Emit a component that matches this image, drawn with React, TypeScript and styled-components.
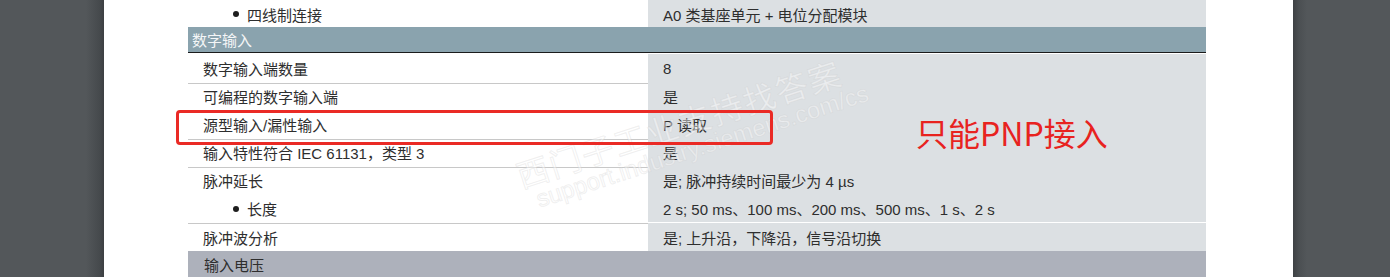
import React from "react";
import styled, { createGlobalStyle } from "styled-components";

const Global = createGlobalStyle`
  html, body { margin: 0; padding: 0; background: #505457; }
  body { font-family: "Liberation Sans", "Noto Sans CJK SC", sans-serif; }
`;

const Viewer = styled.div`
  display: flex;
  height: 277px;
  overflow: hidden;
  background: #505457;
`;

const Gutter = styled.div<{ $side: "left" | "right" }>`
  flex: ${(p) => (p.$side === "left" ? "0 0 104px" : "1 1 auto")};
  background: ${(p) =>
    p.$side === "left"
      ? "linear-gradient(to right, #53575a 0, #53575a 86px, #45494c 100px, #3c3f42 104px)"
      : "linear-gradient(to right, #3e4144 0, #4b4f52 6px, #53575a 14px, #53575a 100%)"};
`;

const Page = styled.div`
  position: relative;
  flex: 0 0 1189px;
  background: #ffffff;
  padding-left: 84px;
  box-sizing: border-box;
`;

const Table = styled.div`
  width: 1018px;
  display: flex;
  flex-direction: column;
  color: #2e2e2e;
  font-size: 15px;
`;

const Row = styled.div<{ $h: number }>`
  display: grid;
  grid-template-columns: 460px 558px;
  height: ${(p) => p.$h}px;
`;

const LabelCell = styled.div<{ $sep?: boolean }>`
  display: flex;
  flex-direction: column;
  justify-content: center;
  padding-left: 15px;
  border-bottom: ${(p) => (p.$sep ? "1px solid #c8c8c8" : "1px solid transparent")};
`;

const ValueCell = styled.div<{ $sep?: boolean }>`
  display: flex;
  flex-direction: column;
  justify-content: center;
  padding-left: 15px;
  background: #dce0e3;
  border-bottom: ${(p) => (p.$sep ? "2px solid #ffffff" : "0")};
`;

const Line = styled.div<{ $bullet?: boolean }>`
  display: flex;
  align-items: center;
  height: 28px;
  white-space: nowrap;
  padding-left: ${(p) => (p.$bullet ? "30px" : "0")};
`;

const Dot = styled.span`
  display: inline-block;
  width: 6px;
  height: 6px;
  border-radius: 50%;
  background: #1e1e1e;
  margin-right: 8px;
`;

const SectionHead = styled.div<{ $variant: "blue" | "gray" }>`
  display: flex;
  align-items: center;
  height: 26px;
  box-sizing: border-box;
  padding-left: ${(p) => (p.$variant === "blue" ? "4px" : "16px")};
  background: ${(p) => (p.$variant === "blue" ? "#8aa3ae" : "#adb1bb")};
  color: ${(p) => (p.$variant === "blue" ? "#f4f6f7" : "#2e2e2e")};
  margin-top: ${(p) => (p.$variant === "blue" ? "3px" : "1px")};
  border-bottom: ${(p) => (p.$variant === "blue" ? "1.5px solid #1b1b1b" : "0")};
  margin-bottom: ${(p) => (p.$variant === "blue" ? "1px" : "0")};
`;

const Mark = styled.div`
  position: absolute;
  left: 72px;
  top: 110px;
  width: 597px;
  height: 35px;
  box-sizing: border-box;
  border: 3px solid #ea2a25;
  border-radius: 4px;
  pointer-events: none;
`;

const Note = styled.div`
  position: absolute;
  left: 812px;
  top: 113px;
  font-family: "Noto Sans CJK SC", sans-serif;
  font-size: 32px;
  line-height: 38px;
  color: #e8231f;
  white-space: nowrap;
`;

const Watermark = styled.div<{ $size: number; $spacing: number }>`
  position: absolute;
  white-space: nowrap;
  font-size: ${(p) => p.$size}px;
  line-height: 1;
  color: rgba(255, 255, 255, 0.45);
  -webkit-text-stroke: 1px rgba(200, 200, 200, 0.28);
  transform: rotate(-18deg);
  transform-origin: left center;
  pointer-events: none;
  letter-spacing: ${(p) => p.$spacing}px;
`;

type R = { label: string; value: string };

const rows: R[] = [
  { label: "数字输入端数量", value: "8" },
  { label: "可编程的数字输入端", value: "是" },
  { label: "源型输入/漏性输入", value: "P 读取" },
  { label: "输入特性符合 IEC 61131，类型 3", value: "是" },
];

export default function App() {
  return (
    <>
      <Global />
      <Viewer>
        <Gutter $side="left" />
        <Page>
          <Table>
            <Row $h={24}>
              <LabelCell>
                <Line $bullet>
                  <Dot />
                  四线制连接
                </Line>
              </LabelCell>
              <ValueCell>
                <Line>A0 类基座单元 + 电位分配模块</Line>
              </ValueCell>
            </Row>
            <SectionHead $variant="blue">数字输入</SectionHead>
            {rows.map((r, i) => (
              <Row $h={28} key={i}>
                <LabelCell $sep>
                  <Line>{r.label}</Line>
                </LabelCell>
                <ValueCell $sep>
                  <Line>{r.value}</Line>
                </ValueCell>
              </Row>
            ))}
            <Row $h={57}>
              <LabelCell $sep>
                <Line>脉冲延长</Line>
                <Line $bullet>
                  <Dot />
                  长度
                </Line>
              </LabelCell>
              <ValueCell $sep>
                <Line>是; 脉冲持续时间最少为 4 µs</Line>
                <Line>2 s; 50 ms、100 ms、200 ms、500 ms、1 s、2 s</Line>
              </ValueCell>
            </Row>
            <Row $h={27}>
              <LabelCell $sep>
                <Line>脉冲波分析</Line>
              </LabelCell>
              <ValueCell>
                <Line>是; 上升沿，下降沿，信号沿切换</Line>
              </ValueCell>
            </Row>
            <SectionHead $variant="gray">输入电压</SectionHead>
          </Table>
          <Watermark $size={32} $spacing={2} style={{ left: 414, top: 162 }}>
            西门子工业支持找答案
          </Watermark>
          <Watermark $size={24} $spacing={0} style={{ left: 433, top: 188 }}>
            support.industry.siemens.com/cs
          </Watermark>
          <Mark />
          <Note>只能PNP接入</Note>
        </Page>
        <Gutter $side="right" />
      </Viewer>
    </>
  );
}
